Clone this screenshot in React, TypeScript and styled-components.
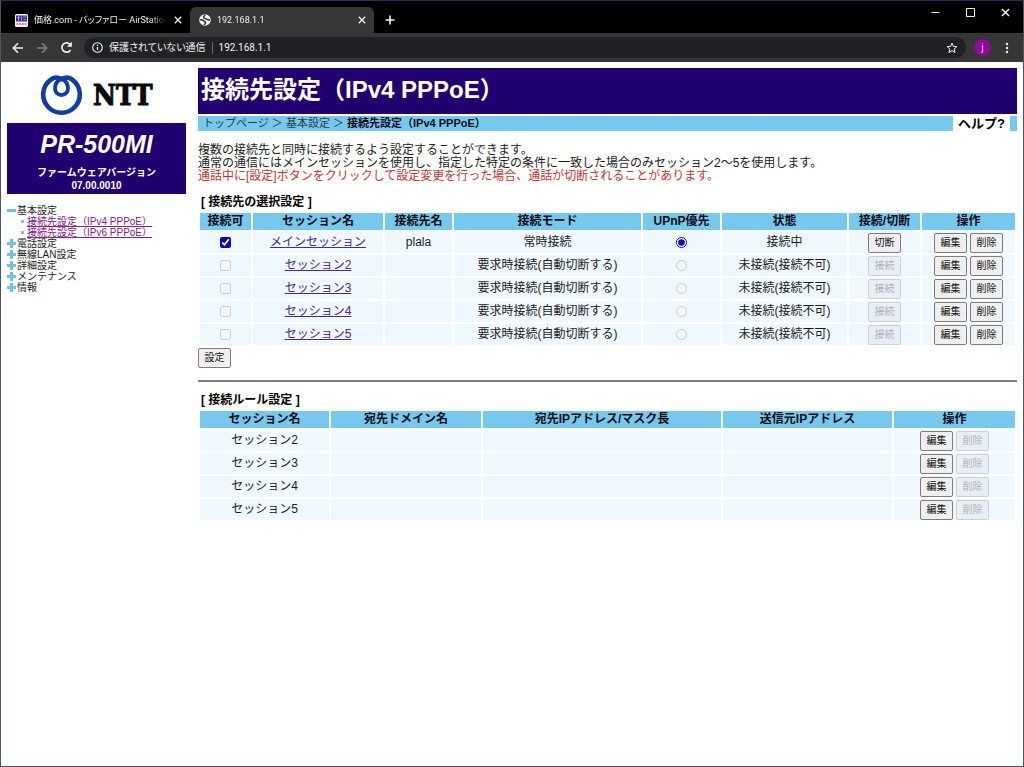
import React, { useState } from "react";
import styled, { createGlobalStyle } from "styled-components";

const navy = "#210070";
const sky = "#76c8ec";
const pale = "#eff7ff";

const GlobalStyle = createGlobalStyle`
  *, *::before, *::after { box-sizing: border-box; }
  body {
    margin: 0;
    background: #fff;
    color: #1c1c1c;
    font: 12px/13px "Liberation Sans", "Noto Sans CJK JP", sans-serif;
  }
  button, input { font-family: inherit; }
`;

/* ---------- browser window ---------- */

const Window = styled.div`
  display: flex;
  flex-direction: column;
  min-height: 100vh;
  border: 1px solid #46575c;
  border-top-color: #22345c;
`;

const Chrome = styled.header`
  background: #000;
  color: #f1f1f1;
  font-family: Roboto, "Noto Sans CJK JP", sans-serif;
  font-feature-settings: "palt";
`;

const TabStrip = styled.div`
  display: flex;
  align-items: flex-end;
  height: 32px;
  padding-left: 5px;
`;

const Tab = styled.div<{ $active?: boolean }>`
  display: flex;
  align-items: center;
  gap: 6px;
  width: 184px;
  height: 26px;
  padding: 0 6px 0 9px;
  border-radius: 6px 6px 0 0;
  background: ${(p) => (p.$active ? "#363636" : "transparent")};
`;

const TabTitle = styled.span`
  flex: 1;
  min-width: 0;
  overflow: hidden;
  white-space: nowrap;
  font-size: 9px;
  line-height: 14px;
  mask-image: linear-gradient(to right, #000 88%, transparent);
`;

const IconButton = styled.button<{ $size?: number; $dim?: boolean }>`
  display: flex;
  flex: none;
  align-items: center;
  justify-content: center;
  width: ${(p) => p.$size ?? 12}px;
  height: ${(p) => p.$size ?? 12}px;
  padding: 0;
  border: 0;
  background: none;
  color: ${(p) => (p.$dim ? "#858585" : "#f1f1f1")};
`;

const NewTab = styled.div`
  display: flex;
  align-items: center;
  height: 26px;
  padding-left: 10px;
`;

const WindowControls = styled.div`
  display: flex;
  align-self: flex-start;
  gap: 21px;
  margin-left: auto;
  padding: 4px 11px 0 0;
`;

const Toolbar = styled.div`
  display: flex;
  align-items: center;
  height: 29px;
  padding: 0 8px 0 9px;
  background: #363636;
`;

const NavButtons = styled.div`
  display: flex;
  gap: 8px;
  margin-right: 10px;
`;

const Omnibox = styled.label`
  display: flex;
  flex: 1;
  align-items: center;
  height: 21px;
  margin-right: 8px;
  padding: 0 7px 0 8px;
  border-radius: 11px;
  background: #202124;
  font-size: 10px;
  line-height: 14px;
`;

const Security = styled.span`
  margin-left: 6px;
  padding-right: 6px;
  border-right: 1px solid #6a6b6e;
  line-height: 12px;
  white-space: nowrap;
`;

const Address = styled.input`
  flex: 1;
  min-width: 0;
  padding: 0 0 0 6px;
  border: 0;
  outline: 0;
  background: none;
  color: inherit;
  font-size: 10px;
`;

const Avatar = styled.button`
  width: 17px;
  height: 17px;
  margin-right: 8px;
  padding: 0;
  border: 0;
  border-radius: 50%;
  background: #8e0b9b;
  color: #e9cfee;
  font-size: 10px;
  line-height: 16px;
`;

/* ---------- router page ---------- */

const Page = styled.div`
  display: flex;
  flex: 1;
  gap: 12px;
  padding: 6px 6px 20px;
`;

const Sidebar = styled.aside`
  flex: none;
  width: 179px;
`;

const Brand = styled.div`
  height: 55px;
  padding: 6px 0 0 33px;
`;

const Model = styled.div`
  padding: 8px 0 2px;
  background: ${navy};
  color: #fff;
  text-align: center;
  font-size: 10px;
  font-weight: bold;
  line-height: 13px;
`;

const ModelName = styled.div`
  margin-bottom: 9px;
  font-size: 25px;
  font-style: italic;
  line-height: 26px;
`;

const Menu = styled.ul`
  margin: 11px 0 0;
  padding: 0;
  list-style: none;
  font-size: 10px;
  line-height: 11px;
`;

const MenuButton = styled.button`
  display: flex;
  align-items: center;
  gap: 1px;
  height: 11px;
  padding: 0;
  border: 0;
  background: none;
  color: #1c1c1c;
  font-size: 10px;
  line-height: 11px;
`;

const SubMenu = styled.ul`
  margin: 0;
  padding: 0;
  list-style: none;
`;

const SubItem = styled.li`
  display: flex;
  align-items: center;
  gap: 3px;
  height: 11px;
  padding-left: 14px;

  &::before {
    content: "";
    width: 3px;
    height: 3px;
    background: #84bfdc;
  }

  a { color: #84208c; }
`;

const Main = styled.main`
  flex: 1;
  min-width: 0;
`;

const Title = styled.h1`
  margin: 0 0 2px;
  padding: 6px 3px 8px;
  background: ${navy};
  color: #fff;
  font-size: 24px;
  line-height: 32px;
`;

const PathBar = styled.div`
  display: flex;
  justify-content: space-between;
  height: 15px;
  padding: 0 7px 0 5px;
  background: ${sky};
  font-size: 11px;
  line-height: 15px;
`;

const Crumbs = styled.nav`
  color: #24404e;
  a { color: inherit; text-decoration: none; }
  b { color: #0c0c18; }
`;

const Help = styled.a`
  padding: 0 5px;
  background: #fff;
  color: #000;
  font-size: 13px;
  font-weight: bold;
  text-decoration: none;
`;

const Intro = styled.p`
  margin: 13px 0 11px;
`;

const Warning = styled.span`
  color: #c43434;
`;

const SectionTitle = styled.h2`
  margin: 0;
  padding-left: 3px;
  color: #000;
  font-size: 12px;
  line-height: 17px;
`;

const Grid = styled.table`
  width: 100%;
  table-layout: fixed;
  border-spacing: 2px;
  text-align: center;

  th, td { padding: 0; }
  th { height: 17px; background: ${sky}; color: #0c0c18; line-height: 17px; }
  td { height: 21px; background: ${pale}; line-height: 19px; }
  a { color: #4b2a8c; }
`;

const Actions = styled.div`
  display: flex;
  justify-content: center;
  gap: 3px;
`;

const PushButton = styled.button`
  width: 33px;
  height: 20px;
  padding: 0;
  border: 1px solid #7c7c7c;
  border-radius: 2px;
  background: #efefef;
  color: #111;
  font-size: 10px;
  line-height: 16px;

  &:disabled {
    border-color: #cbd0d6;
    background: #e9eef4;
    color: #b0b4b8;
  }
`;

const FormFooter = styled.div`
  display: flex;
  padding-top: 1px;
`;

const Choice = styled.input`
  display: block;
  width: 11px;
  height: 11px;
  margin: 0 auto;
  accent-color: #1206b4;
`;

const Divider = styled.hr`
  height: 2px;
  margin: 12px 0 10px;
  border: 0;
  background: #808080;
`;

/* ---------- drawings ---------- */

const stroke = { fill: "none", stroke: "currentColor" } as const;

const Cross = ({ size = 8 }: { size?: number }) => (
  <svg width={size} height={size} viewBox="0 0 8 8" {...stroke} strokeWidth="1.3">
    <path d="M.8.8l6.4 6.4M7.2.8L.8 7.2" />
  </svg>
);

const Arrow = ({ flip }: { flip?: boolean }) => (
  <svg width="12" height="12" viewBox="0 0 12 12" {...stroke} strokeWidth="1.5">
    <path d={flip ? "M1 6h9.5M6 1.2L10.8 6 6 10.8" : "M11 6H1.5M6 1.2L1.2 6 6 10.8"} />
  </svg>
);

const Reload = () => (
  <svg width="13" height="13" viewBox="0 0 13 13" {...stroke} strokeWidth="1.7">
    <path d="M10.6 9A4.7 4.7 0 1 1 10 3.2" />
    <path d="M11.9.8v5H6.9z" fill="currentColor" stroke="none" />
  </svg>
);

const ShopIcon = () => (
  <svg width="13" height="13" viewBox="0 0 13 13">
    <rect width="13" height="13" rx="1.5" fill="#f4f0f6" />
    <rect x="1" y="1.5" width="11" height="6" fill="#3c2a92" />
    <path d="M3.5 2v5M2 3.5h3M6.5 2.5v4M8 3h3M8.5 5.5h2.5" stroke="#cfc8ee" strokeWidth=".7" />
    <path d="M1.5 10h10" stroke="#d98a94" strokeWidth="1.8" strokeDasharray="2 .7" />
  </svg>
);

const Globe = () => (
  <svg width="12" height="12" viewBox="0 0 12 12">
    <circle cx="6" cy="6" r="5.8" fill="#f1f1f1" />
    <path
      d="M6.200 .8C5 2 4.200 2.600 4.600 3.600C5.200 4.800 7 4.200 7.600 5.200C8 6 9.400 6 11 5.800M1 5.800C2.400 5.800 4 5.600 4.600 6.600C5 7.600 6.600 7.400 6.600 8.600C6.600 9.600 5.400 9.800 5.200 11"
      fill="none" stroke="#363636" strokeWidth="1.5"
    />
  </svg>
);

const Info = () => (
  <svg width="11" height="11" viewBox="0 0 11 11" {...stroke} strokeWidth="1.1">
    <circle cx="5.5" cy="5.5" r="4.8" />
    <path d="M5.5 5v3M5.5 2.8v1.2" strokeWidth="1.2" />
  </svg>
);

const Star = () => (
  <svg width="12" height="12" viewBox="0 0 12 12" {...stroke} strokeWidth="1">
    <path d="M6 1.2l1.4 3.2 3.5.3-2.7 2.3.8 3.5L6 8.7l-3 1.8.8-3.5L1.1 4.7l3.5-.3z" />
  </svg>
);

const Dots = () => (
  <svg width="4" height="12" viewBox="0 0 4 12" fill="currentColor">
    <circle cx="2" cy="2" r="1.2" />
    <circle cx="2" cy="6" r="1.2" />
    <circle cx="2" cy="10" r="1.2" />
  </svg>
);

const Logo = () => (
  <svg width="114" height="42" viewBox="0 0 114 42" role="img" aria-label="NTT">
    <g fill="none" stroke="#0f3da6">
      <path
        d="M21.500 5.200C17.500 3 13.500 3.200 10.500 5.800A18.300 18.300 0 1 0 32.500 5.800C29.500 3.200 25.500 3 21.500 5.200z"
        strokeWidth="4.600"
      />
      <path
        d="M21.500 4.500C17.500 6.500 15 10.500 15 14.500A6.500 6.500 0 0 0 28 14.500C28 10.500 25.500 6.500 21.500 4.500z"
        strokeWidth="3.800"
      />
    </g>
    <text
      x="53" y="31" fill="#0a0a0a" stroke="#0a0a0a" strokeWidth="1" fontSize="28" fontWeight="bold"
      fontFamily="'DejaVu Serif Condensed', 'DejaVu Serif', serif"
    >
      NTT
    </text>
  </svg>
);

const Toggle = ({ open }: { open?: boolean }) => (
  <svg width="9" height="9" viewBox="0 0 9 9" stroke="#72bfe2" strokeWidth="3">
    <path d={open ? "M0 4.5h9" : "M0 4.5h9M4.5 0v9"} />
  </svg>
);

/* ---------- data ---------- */

const sessions = [
  { name: "メインセッション", peer: "plala", mode: "常時接続", state: "接続中", main: true },
  ...[2, 3, 4, 5].map((n) => ({
    name: `セッション${n}`,
    peer: "",
    mode: "要求時接続(自動切断する)",
    state: "未接続(接続不可)",
    main: false,
  })),
];

const sessionColumns: [string, number][] = [
  ["接続可", 51], ["セッション名", 130], ["接続先名", 67], ["接続モード", 187],
  ["UPnP優先", 77], ["状態", 125], ["接続/切断", 71], ["操作", 93],
];

const ruleColumns: [string, number][] = [
  ["セッション名", 129], ["宛先ドメイン名", 150], ["宛先IPアドレス/マスク長", 238],
  ["送信元IPアドレス", 169], ["操作", 121],
];

const GridHead = ({ columns }: { columns: [string, number][] }) => (
  <>
    <colgroup>
      {columns.map(([label, width]) => <col key={label} width={width} />)}
    </colgroup>
    <thead>
      <tr>{columns.map(([label]) => <th key={label} scope="col">{label}</th>)}</tr>
    </thead>
  </>
);

export default function App() {
  const [enabled, setEnabled] = useState(true);
  const [url, setUrl] = useState("192.168.1.1");

  return (
    <Window>
      <GlobalStyle />
      <Chrome>
        <TabStrip>
          <Tab>
            <ShopIcon />
            <TabTitle>価格.com - バッファロー AirStation V</TabTitle>
            <IconButton aria-label="タブを閉じる"><Cross /></IconButton>
          </Tab>
          <Tab $active>
            <Globe />
            <TabTitle>192.168.1.1</TabTitle>
            <IconButton aria-label="タブを閉じる"><Cross /></IconButton>
          </Tab>
          <NewTab>
            <IconButton aria-label="新しいタブ">
              <svg width="10" height="10" viewBox="0 0 10 10" {...stroke} strokeWidth="1.6">
                <path d="M5 .5v9M.5 5h9" />
              </svg>
            </IconButton>
          </NewTab>
          <WindowControls>
            <IconButton $size={14} aria-label="最小化">
              <svg width="9" height="9" viewBox="0 0 9 9" {...stroke}><path d="M.5 4.5h8" /></svg>
            </IconButton>
            <IconButton $size={14} aria-label="最大化">
              <svg width="9" height="9" viewBox="0 0 9 9" {...stroke}><path d="M.5.5h8v8h-8z" /></svg>
            </IconButton>
            <IconButton $size={14} aria-label="閉じる"><Cross size={9} /></IconButton>
          </WindowControls>
        </TabStrip>
        <Toolbar>
          <NavButtons>
            <IconButton $size={16} aria-label="戻る"><Arrow /></IconButton>
            <IconButton $size={16} $dim aria-label="進む"><Arrow flip /></IconButton>
            <IconButton $size={16} aria-label="再読み込み"><Reload /></IconButton>
          </NavButtons>
          <Omnibox>
            <Info />
            <Security>保護されていない通信</Security>
            <Address aria-label="アドレス" value={url} onChange={(e) => setUrl(e.target.value)} />
            <IconButton $size={14} aria-label="ブックマーク"><Star /></IconButton>
          </Omnibox>
          <Avatar>j</Avatar>
          <IconButton $size={16} aria-label="メニュー"><Dots /></IconButton>
        </Toolbar>
      </Chrome>

      <Page>
        <Sidebar>
          <Brand><Logo /></Brand>
          <Model>
            <ModelName>PR-500MI</ModelName>
            <div>ファームウェアバージョン</div>
            <div>07.00.0010</div>
          </Model>
          <Menu>
            <li>
              <MenuButton aria-expanded="true"><Toggle open />基本設定</MenuButton>
              <SubMenu>
                <SubItem><a href="#ipv4">接続先設定（IPv4 PPPoE）</a></SubItem>
                <SubItem><a href="#ipv6">接続先設定（IPv6 PPPoE）</a></SubItem>
              </SubMenu>
            </li>
            {["電話設定", "無線LAN設定", "詳細設定", "メンテナンス", "情報"].map((label) => (
              <li key={label}>
                <MenuButton aria-expanded="false"><Toggle />{label}</MenuButton>
              </li>
            ))}
          </Menu>
        </Sidebar>

        <Main>
          <Title>接続先設定（IPv4 PPPoE）</Title>
          <PathBar>
            <Crumbs>
              <a href="#top">トップページ</a> ＞ <a href="#basic">基本設定</a> ＞{" "}
              <b>接続先設定（IPv4 PPPoE）</b>
            </Crumbs>
            <Help href="#help">ヘルプ?</Help>
          </PathBar>

          <Intro>
            複数の接続先と同時に接続するよう設定することができます。<br />
            通常の通信にはメインセッションを使用し、指定した特定の条件に一致した場合のみセッション2～5を使用します。<br />
            <Warning>通話中に[設定]ボタンをクリックして設定変更を行った場合、通話が切断されることがあります。</Warning>
          </Intro>

          <SectionTitle>[ 接続先の選択設定 ]</SectionTitle>
          <Grid>
            <GridHead columns={sessionColumns} />
            <tbody>
              {sessions.map((s) => (
                <tr key={s.name}>
                  <td>
                    <Choice
                      type="checkbox"
                      aria-label={`${s.name} 接続可`}
                      checked={s.main && enabled}
                      disabled={!s.main}
                      onChange={(e) => setEnabled(e.target.checked)}
                    />
                  </td>
                  <td><a href="#session">{s.name}</a></td>
                  <td>{s.peer}</td>
                  <td>{s.mode}</td>
                  <td>
                    <Choice
                      type="radio"
                      name="upnp"
                      aria-label={`${s.name} UPnP優先`}
                      defaultChecked={s.main}
                      disabled={!s.main}
                    />
                  </td>
                  <td>{s.state}</td>
                  <td>
                    <Actions>
                      <PushButton disabled={!s.main}>{s.main ? "切断" : "接続"}</PushButton>
                    </Actions>
                  </td>
                  <td>
                    <Actions>
                      <PushButton>編集</PushButton>
                      <PushButton>削除</PushButton>
                    </Actions>
                  </td>
                </tr>
              ))}
            </tbody>
          </Grid>
          <FormFooter>
            <PushButton>設定</PushButton>
          </FormFooter>

          <Divider />

          <SectionTitle>[ 接続ルール設定 ]</SectionTitle>
          <Grid>
            <GridHead columns={ruleColumns} />
            <tbody>
              {sessions.filter((s) => !s.main).map((s) => (
                <tr key={s.name}>
                  <td>{s.name}</td>
                  <td />
                  <td />
                  <td />
                  <td>
                    <Actions>
                      <PushButton>編集</PushButton>
                      <PushButton disabled>削除</PushButton>
                    </Actions>
                  </td>
                </tr>
              ))}
            </tbody>
          </Grid>
        </Main>
      </Page>
    </Window>
  );
}
